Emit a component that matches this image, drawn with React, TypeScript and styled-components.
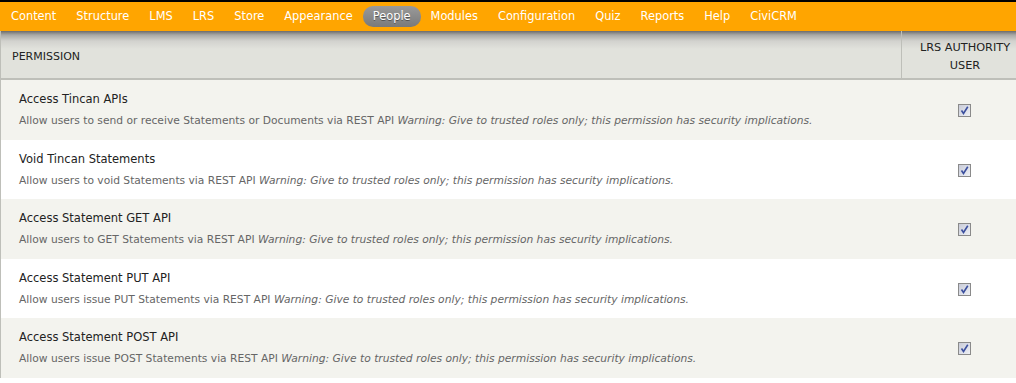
import React from 'react';
import styled, { createGlobalStyle } from 'styled-components';

const GlobalStyle = createGlobalStyle`
  html, body {
    margin: 0;
    padding: 0;
    background: #ffffff;
    font-family: "DejaVu Sans", Verdana, sans-serif;
  }
`;

const Page = styled.div`
  width: 1016px;
  border-top: 2px solid #000;
`;

const Toolbar = styled.nav`
  height: 29px;
  background: #ffa500;
  display: flex;
  align-items: center;
  padding: 0 0 0 1px;
  position: relative;
  z-index: 1;
`;

const NavLink = styled.a<{ active?: boolean }>`
  font-size: 11.4px;
  color: #fff;
  text-decoration: none;
  padding: 4px 10px 4px;
  line-height: 13px;
  border-radius: 10px;
  background: ${({ active }) =>
    active ? 'linear-gradient(#9a9a9a, #7a7a7a)' : 'transparent'};
  text-shadow: ${({ active }) => (active ? '0 1px 0 #555' : 'none')};
`;

const Table = styled.div`
  border-left: 1px solid #bebfb9;
`;

const HeadRow = styled.div`
  display: grid;
  grid-template-columns: 1fr 115px;
  height: 47px;
  background: linear-gradient(#6b6b6b 0, #a9a9a6 4px, #d2d2ce 10px, #e1e2dc 18px);
  border-bottom: 2px solid #bebfb9;
`;

const HeadCell = styled.div<{ center?: boolean }>`
  display: flex;
  align-items: center;
  justify-content: ${({ center }) => (center ? 'center' : 'flex-start')};
  text-align: ${({ center }) => (center ? 'center' : 'left')};
  padding: 4px 0 0 11px;
  font-size: 11px;
  line-height: 18px;
  color: #222;
  & + & {
    border-left: 1px solid #bebfb9;
    padding: 5px 0 0 12px;
    font-size: 11.3px;
    white-space: nowrap;
  }
`;

const Row = styled.div<{ odd?: boolean }>`
  display: grid;
  grid-template-columns: 1fr 115px;
  height: 59.5px;
  background: ${({ odd }) => (odd ? '#f3f3ee' : '#ffffff')};
`;

const PermCell = styled.div`
  padding: 12px 0 0 18px;
`;

const Title = styled.div`
  font-size: 11.5px;
  color: #222;
  line-height: 15px;
`;

const Desc = styled.div`
  margin-top: 7px;
  font-size: 10.7px;
  color: #666;
  line-height: 13px;
  white-space: nowrap;
  em {
    font-style: italic;
  }
`;

const CheckCell = styled.div`
  display: flex;
  justify-content: center;
  padding-top: 24px;
  padding-left: 12px;
`;

const CheckBox = styled.span`
  width: 11px;
  height: 11px;
  border: 1px solid #8a8a8a;
  background: linear-gradient(135deg, #c8cbd8, #eef0f5);
  display: flex;
  align-items: center;
  justify-content: center;
`;

const navItems = [
  'Content',
  'Structure',
  'LMS',
  'LRS',
  'Store',
  'Appearance',
  'People',
  'Modules',
  'Configuration',
  'Quiz',
  'Reports',
  'Help',
  'CiviCRM',
];

const perms = [
  {
    title: 'Access Tincan APIs',
    desc: 'Allow users to send or receive Statements or Documents via REST API',
  },
  { title: 'Void Tincan Statements', desc: 'Allow users to void Statements via REST API' },
  { title: 'Access Statement GET API', desc: 'Allow users to GET Statements via REST API' },
  { title: 'Access Statement PUT API', desc: 'Allow users issue PUT Statements via REST API' },
  { title: 'Access Statement POST API', desc: 'Allow users issue POST Statements via REST API' },
];

function Check() {
  return (
    <CheckBox>
      <svg width="9" height="9" viewBox="0 0 9 9">
        <path d="M1.5 4.5 L3.5 7.5 L7.8 0.8" fill="none" stroke="#3b4f9e" strokeWidth="1.6" />
      </svg>
    </CheckBox>
  );
}

export default function App() {
  return (
    <Page>
      <GlobalStyle />
      <Toolbar>
        {navItems.map((item) => (
          <NavLink key={item} active={item === 'People'}>
            {item}
          </NavLink>
        ))}
      </Toolbar>
      <Table>
        <HeadRow>
          <HeadCell>PERMISSION</HeadCell>
          <HeadCell center>
            LRS AUTHORITY
            <br />
            USER
          </HeadCell>
        </HeadRow>
        {perms.map((p, i) => (
          <Row key={p.title} odd={i % 2 === 0}>
            <PermCell>
              <Title>{p.title}</Title>
              <Desc>
                {p.desc}{' '}
                <em>Warning: Give to trusted roles only; this permission has security implications.</em>
              </Desc>
            </PermCell>
            <CheckCell>
              <Check />
            </CheckCell>
          </Row>
        ))}
      </Table>
    </Page>
  );
}
